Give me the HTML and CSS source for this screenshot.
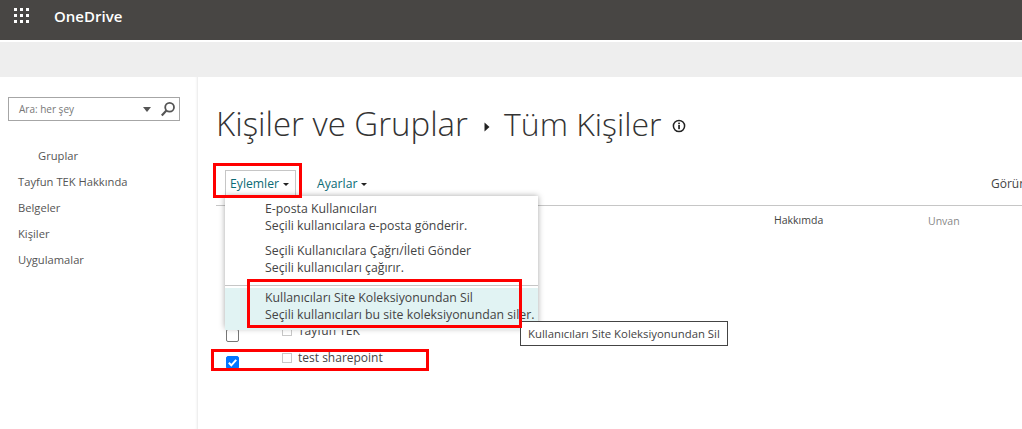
FILE: index.html
```html
<!DOCTYPE html>
<html lang="tr">
<head>
<meta charset="utf-8">
<title>Kişiler ve Gruplar</title>
<link rel="stylesheet" href="styles.css">
</head>
<body>
<header class="suite">
  <svg class="waffle" width="15" height="15" viewBox="0 0 15 15"><g fill="#fff"><rect x="0" y="0" width="3" height="3"/><rect x="6" y="0" width="3" height="3"/><rect x="12" y="0" width="3" height="3"/><rect x="0" y="6" width="3" height="3"/><rect x="6" y="6" width="3" height="3"/><rect x="12" y="6" width="3" height="3"/><rect x="0" y="12" width="3" height="3"/><rect x="6" y="12" width="3" height="3"/><rect x="12" y="12" width="3" height="3"/></g></svg>
  <span class="brand">OneDrive</span>
</header>
<div class="band"></div>
<div class="main">
  <nav class="side">
    <div class="search">
      <span class="search-text">Ara: her şey</span>
      <span class="search-caret"></span>
      <svg class="search-icon" width="16" height="16" viewBox="0 0 16 16"><circle cx="9.6" cy="6.2" r="4.4" fill="none" stroke="#555" stroke-width="1.8"/><path d="M6.4 9.6 1.8 14.4" stroke="#555" stroke-width="2.2" fill="none"/></svg>
    </div>
    <ul class="nav-list">
      <li class="nav-item nav-sub">Gruplar</li>
      <li class="nav-item">Tayfun TEK Hakkında</li>
      <li class="nav-item">Belgeler</li>
      <li class="nav-item">Kişiler</li>
      <li class="nav-item">Uygulamalar</li>
    </ul>
  </nav>
  <section class="content">
    <h1 class="title">
      <span>Kişiler ve Gruplar</span>
      <svg class="crumb" width="6" height="10" viewBox="0 0 6 10"><path d="M0.5 0.5 5.5 5 0.5 9.5Z" fill="#222"/></svg>
      <span class="title-sub">Tüm Kişiler</span>
      <svg class="info" width="14" height="14" viewBox="0 0 14 14"><circle cx="7" cy="7" r="5.6" fill="none" stroke="#222" stroke-width="1.5"/><rect x="6.2" y="6" width="1.7" height="4.2" fill="#222"/><rect x="6.2" y="3.6" width="1.7" height="1.6" fill="#222"/></svg>
    </h1>
    <div class="toolbar">
      <div class="tools">
        <button class="tool tool-open">Eylemler<i class="caret"></i></button>
        <button class="tool">Ayarlar<i class="caret"></i></button>
      </div>
      <span class="view-label">Görünüm</span>
    </div>
    <div class="columns">
      <span class="col-about">Hakkımda</span>
      <span class="col-title">Unvan</span>
    </div>
    <div class="rows">
      <div class="row"><span class="check"></span><span class="presence"></span><span class="row-name">Tayfun TEK</span></div>
      <div class="row"><span class="check check-on"><svg width="13" height="13" viewBox="0 0 13 13"><path d="M2.8 6.8 5.3 9.3 10.2 3.8" fill="none" stroke="#fff" stroke-width="2"/></svg></span><span class="presence"></span><span class="row-name">test sharepoint</span></div>
    </div>
  </section>
</div>

<div class="menu">
  <div class="menu-item"><div>E-posta Kullanıcıları</div><div>Seçili kullanıcılara e-posta gönderir.</div></div>
  <div class="menu-item"><div>Seçili Kullanıcılara Çağrı/İleti Gönder</div><div>Seçili kullanıcıları çağırır.</div></div>
  <div class="menu-sep"></div>
  <div class="menu-item menu-hot"><div>Kullanıcıları Site Koleksiyonundan Sil</div><div>Seçili kullanıcıları bu site koleksiyonundan siler.</div></div>
</div>
<div class="tooltip">Kullanıcıları Site Koleksiyonundan Sil</div>
<div class="mark mark-tool"></div>
<div class="mark mark-menu"></div>
<div class="mark mark-row"></div>
</body>
</html>
```
FILE: styles.css
```css
* { box-sizing: border-box; }
html, body { margin: 0; height: 100%; overflow: hidden; background: #fff; }
body { font-family: "Open Sans", "Liberation Sans", sans-serif; font-size: 11.5px; color: #444; position: relative; }

.suite { height: 40px; background: #484644; display: flex; align-items: flex-start; padding: 8px 0 0 14px; }
.waffle { display: block; }
.brand { color: #fff; font-weight: 600; font-size: 15px; line-height: 16px; margin-left: 25px; }
.band { height: 35px; margin-top: 2px; background: #eeeeee; }

.main { display: flex; height: 352px; }
.side { width: 198px; flex: none; padding: 20px 0 0 8px; border-right: 1px solid #efefef; box-shadow: inset -2px 0 2px -1px #f6f6f6; }
.search { width: 172px; height: 24px; border: 1px solid #a6a6a6; display: flex; align-items: center; padding: 0 3px 0 10px; }
.search-text { flex: 1; color: #777; font-size: 10px; }
.search-caret { width: 0; height: 0; border: 4.5px solid transparent; border-top: 5px solid #555; border-bottom: 0; margin-right: 9px; }
.nav-list { list-style: none; margin: 22px 0 0; padding: 0 0 0 10px; }
.nav-item { height: 26px; line-height: 26px; color: #555; font-size: 11.2px; }
.nav-sub { padding-left: 20px; }

.content { flex: 1; min-width: 0; padding: 24px 0 0 18px; }
.title { margin: 0; height: 46px; display: flex; align-items: center; font-weight: 300; font-size: 33px; line-height: 46px; color: #333; white-space: nowrap; }
.title-sub { font-size: 32px; }
.crumb { margin: 5px 14px 0 16px; }
.info { margin: 4px 0 0 11px; }

.toolbar { display: flex; align-items: flex-start; height: 35px; margin: 23px 0 0 9px; white-space: nowrap; }
.tools { width: 766px; flex: none; display: flex; gap: 16px; }
.tool { font: inherit; font-size: 12.2px; color: #0b6a75; background: none; border: 1px solid transparent; height: 26px; padding: 0 4px; display: flex; align-items: center; }
.tool-open { border: 1px solid #c6c6c6; width: 71px; }
.caret { display: inline-block; width: 0; height: 0; border: 3px solid transparent; border-top: 3px solid #222; border-bottom: 0; margin: 2px 0 0 4px; }
.view-label { font-size: 12px; line-height: 26px; margin-top: 1px; color: #444; }

.columns { border-top: 1px solid #c6c6c6; height: 53px; display: grid; grid-template-columns: 154px 1fr; align-items: start; padding: 7px 0 0 558px; font-size: 10.5px; }
.col-about { color: #444; }
.col-title { margin-top: 1px; color: #888; }

.rows { margin: 68px 0 0 10px; }
.row { display: flex; align-items: flex-start; height: 27px; }
.check { width: 13px; height: 13px; border: 1px solid #767676; border-radius: 2px; margin-top: 3px; flex: none; display: block; }
.check-on { background: #0075ff; border-color: #0075ff; }
.check-on svg { display: block; margin: -1px; }
.presence { width: 10px; height: 10px; border: 1px solid #c8c8c8; margin-left: 43px; flex: none; }
.row-name { margin: -1px 0 0 6px; font-size: 12px; line-height: 12px; color: #444; }

.menu { position: absolute; left: 225px; top: 196px; width: 313px; height: 132px; background: #fff; box-shadow: 0 0 6px rgba(0,0,0,.35); padding-top: 4px; font-size: 12.3px; line-height: 17px; color: #444; white-space: nowrap; }
.menu-item { padding: 0 0 0 40px; height: 42px; }
.menu-sep { height: 1px; background: #c6c6c6; margin-top: 1px; }
.menu-hot { background: #e1f3f3; margin-top: 2px; height: 42px; padding-top: 1px; }

.tooltip { position: absolute; left: 520px; top: 321px; width: 208px; height: 25px; border: 1px solid #444; background: #fff; font-size: 11.35px; line-height: 23px; padding-left: 7px; color: #444; white-space: nowrap; }

.mark { position: absolute; border: 3px solid #f00; }
.mark-tool { left: 213px; top: 163px; width: 89px; height: 35px; }
.mark-menu { left: 247px; top: 279px; width: 275px; height: 49px; }
.mark-row { left: 211px; top: 349px; width: 218px; height: 22px; }
```
